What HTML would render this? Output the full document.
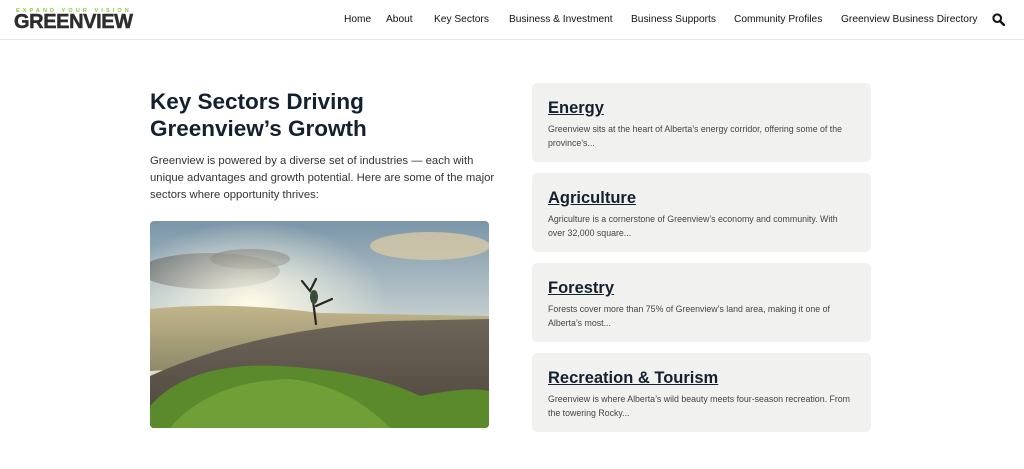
<!DOCTYPE html>
<html><head><meta charset="utf-8"><style>
*{margin:0;padding:0;box-sizing:border-box}
body{width:1024px;height:469px;background:#fff;font-family:"Liberation Sans",Arial,sans-serif;position:relative;overflow:hidden;color:#222}
.hdr{position:absolute;left:0;top:0;width:1024px;height:40px;border-bottom:1px solid #e6e6e6}
.tag{position:absolute;left:16px;top:8px;font-size:5.5px;font-weight:bold;letter-spacing:3.1px;color:#8dc63f;white-space:nowrap}
.logo{position:absolute;left:14px;top:13px;font-size:20px;line-height:18px;font-weight:bold;color:#2d2d2d;letter-spacing:-0.4px;white-space:nowrap;-webkit-text-stroke:0.5px #2d2d2d}
.nav a{position:absolute;top:14px;font-size:10.2px;color:#111;text-decoration:none;white-space:nowrap}
h1{position:absolute;left:150px;top:88px;font-size:22.5px;line-height:27px;font-weight:bold;color:#14202e}
.intro{position:absolute;left:150px;top:153px;white-space:nowrap;font-size:11.3px;line-height:17px;color:#333}
.img{position:absolute;left:150px;top:221px;width:339px;height:207px;border-radius:4px;overflow:hidden}
.card{position:absolute;left:532px;width:339px;height:79px;background:#f1f2f0;border-radius:5px;padding:14px 16px}
.card h2{font-size:16.5px;font-weight:bold;color:#14202e;text-decoration:underline;line-height:22px}
.card p{font-size:8.8px;line-height:14px;color:#444;margin-top:3px}
</style></head><body>
<div class="hdr">
<div class="tag">EXPAND YOUR VISION</div>
<div class="logo">GREENVIEW</div>
<div class="nav">
<a style="left:344px">Home</a><a style="left:386px">About</a><a style="left:434px">Key Sectors</a><a style="left:509px">Business &amp; Investment</a><a style="left:631px">Business Supports</a><a style="left:734px">Community Profiles</a><a style="left:841px">Greenview Business Directory</a>
</div>
<svg style="position:absolute;left:992px;top:13px" width="13" height="13" viewBox="0 0 13 13"><circle cx="5.2" cy="5.2" r="3.8" fill="none" stroke="#111" stroke-width="2"/><line x1="8" y1="8" x2="12" y2="12" stroke="#111" stroke-width="2.4" stroke-linecap="round"/></svg>
</div>
<h1>Key Sectors Driving<br>Greenview’s Growth</h1>
<div class="intro">Greenview is powered by a diverse set of industries — each with<br>unique advantages and growth potential. Here are some of the major<br>sectors where opportunity thrives:</div>
<div class="img"><svg width="339" height="207" viewBox="0 0 339 207">
<defs>
<linearGradient id="sky" x1="0" y1="0" x2="0" y2="1"><stop offset="0" stop-color="#7a95a8"/><stop offset=".5" stop-color="#c9d3d2"/><stop offset="1" stop-color="#f4e8c0"/></linearGradient>
<radialGradient id="sun" cx=".3" cy=".4" r=".4"><stop offset="0" stop-color="#fffbe8"/><stop offset="1" stop-color="#fffbe8" stop-opacity="0"/></radialGradient>
<linearGradient id="mt" x1="0" y1="0" x2="0" y2="1"><stop offset="0" stop-color="#c2b58a"/><stop offset="1" stop-color="#8f8a6a"/></linearGradient>
<linearGradient id="gr" x1="0" y1="0" x2="0" y2="1"><stop offset="0" stop-color="#6d6558"/><stop offset="1" stop-color="#4e463c"/></linearGradient>
</defs>
<rect width="339" height="207" fill="url(#sky)"/>
<ellipse cx="60" cy="50" rx="70" ry="18" fill="#5e5f5e" opacity=".7"/>
<ellipse cx="100" cy="38" rx="40" ry="10" fill="#4e4f50" opacity=".6"/>
<ellipse cx="280" cy="25" rx="60" ry="14" fill="#d7c9a5" opacity=".8"/>
<rect width="339" height="207" fill="url(#sun)"/>
<path d="M0 88 Q80 80 170 92 L339 95 L339 130 L0 150 Z" fill="url(#mt)"/>
<path d="M0 155 Q100 110 240 100 L339 98 L339 207 L0 207 Z" fill="url(#gr)"/>
<path d="M0 207 L0 185 Q40 140 130 145 Q220 150 270 175 Q320 165 339 170 L339 207 Z" fill="#5a8a2c"/>
<path d="M20 207 Q60 160 140 158 Q200 165 240 207 Z" fill="#78a83a" opacity=".7"/>
<g stroke="#2a2622" stroke-width="2.2" fill="none" stroke-linecap="round"><path d="M152 60 L160 70 L166 58"/><path d="M162 72 L166 103"/><path d="M166 85 L182 78"/></g>
<ellipse cx="164" cy="76" rx="4" ry="7" fill="#3c4a3a"/>
</svg></div>
<div class="card" style="top:83px"><h2>Energy</h2><p>Greenview sits at the heart of Alberta’s energy corridor, offering some of the province’s...</p></div>
<div class="card" style="top:173px"><h2>Agriculture</h2><p>Agriculture is a cornerstone of Greenview’s economy and community. With over 32,000 square...</p></div>
<div class="card" style="top:263px"><h2>Forestry</h2><p>Forests cover more than 75% of Greenview’s land area, making it one of Alberta’s most...</p></div>
<div class="card" style="top:353px"><h2>Recreation &amp; Tourism</h2><p>Greenview is where Alberta’s wild beauty meets four-season recreation. From the towering Rocky...</p></div>
</body></html>
